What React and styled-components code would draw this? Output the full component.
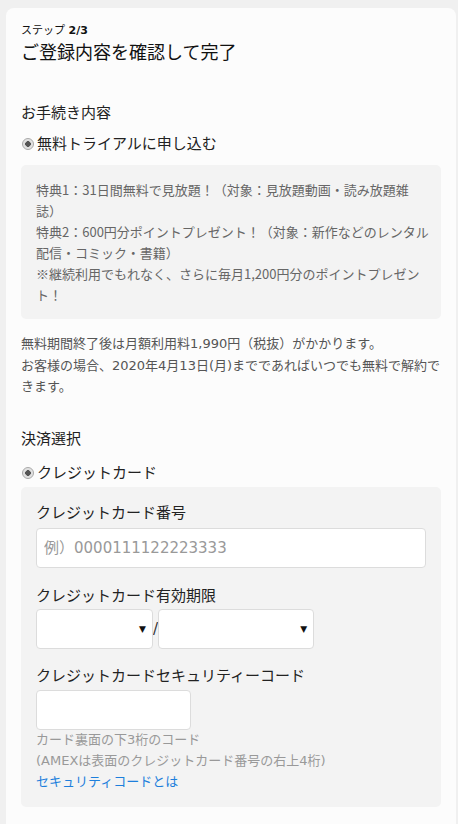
import React from "react";
import styled, { createGlobalStyle } from "styled-components";

const GlobalStyle = createGlobalStyle`
  html, body {
    margin: 0;
    padding: 0;
    background: #f0f0f0;
  }
  body {
    font-family: "DejaVu Sans", "Noto Sans CJK JP", sans-serif;
    color: #222;
  }
`;

const Page = styled.div`
  padding: 8px 2px 0 6px;
`;

const Card = styled.div`
  background: #fcfcfc;
  border-radius: 8px 8px 0 0;
  padding: 14px 15px 20px;
  min-height: 830px;
  box-sizing: border-box;
`;

const Step = styled.div`
  font-size: 11px;
  line-height: 18px;
  color: #111;

  b {
    font-weight: bold;
  }
`;

const Title = styled.h1`
  margin: 0;
  font-size: 18px;
  line-height: 26px;
  font-weight: normal;
  color: #111;
`;

const Heading = styled.h2`
  margin: ${({ $top }) => $top}px 0 ${({ $bottom }) => $bottom}px;
  font-size: 15px;
  line-height: 22px;
  font-weight: normal;
  color: #222;
`;

const RadioRow = styled.label`
  display: flex;
  align-items: center;
  gap: 3px;
  font-size: 15px;
  line-height: 22px;
  color: #222;
  margin-bottom: ${({ $bottom }) => $bottom}px;
`;

const RadioDot = styled.span`
  width: 12px;
  height: 12px;
  box-sizing: border-box;
  border-radius: 50%;
  border: 1px solid #a8a8a8;
  background: radial-gradient(circle, #555 0 2.6px, #dcdcdc 3px, #eee 100%);
  flex-shrink: 0;
  margin-left: 1px;
`;

const Panel = styled.div`
  background: #f3f3f3;
  border-radius: 5px;
  padding: ${({ $pad }) => $pad};
`;

const PerkText = styled.p`
  margin: 0;
  font-family: "Noto Sans CJK JP", sans-serif;
  font-size: 13px;
  line-height: 21px;
  color: #666;
`;

const Notes = styled.p`
  margin: 14px 0 0;
  font-size: 13px;
  line-height: 21.5px;
  color: #555;
`;

const FieldLabel = styled.div`
  font-size: 15px;
  line-height: 22px;
  color: #222;
  margin-top: ${({ $top }) => $top || 0}px;
  margin-bottom: ${({ $bottom }) => ($bottom === undefined ? 4 : $bottom)}px;
`;

const TextInput = styled.input`
  display: block;
  box-sizing: border-box;
  width: ${({ $width }) => $width};
  height: 40px;
  border: 1px solid #dcdcdc;
  border-radius: 4px;
  background: #fff;
  padding: 0 7px;
  font-family: inherit;
  font-size: 15px;
  color: #333;

  &::placeholder {
    color: #999;
  }
`;

const ExpiryRow = styled.div`
  display: flex;
  align-items: center;
`;

const SelectWrap = styled.div`
  position: relative;
  width: ${({ $width }) => $width}px;
  height: 40px;
`;

const Select = styled.select`
  appearance: none;
  width: 100%;
  height: 100%;
  box-sizing: border-box;
  border: 1px solid #dcdcdc;
  border-radius: 4px;
  background: #fff;
  font-family: inherit;
  font-size: 15px;
`;

const Arrow = styled.span`
  position: absolute;
  right: 7px;
  top: 50%;
  transform: translateY(-50%);
  font-size: 9px;
  line-height: 1;
  color: #111;
  pointer-events: none;
`;

const Slash = styled.span`
  font-size: 15px;
  color: #333;
`;

const HelpBlock = styled.div`
  margin-top: -1px;
`;

const Help = styled.div`
  font-size: 13px;
  line-height: 21px;
  color: #999;
`;

const HelpLink = styled.a`
  display: block;
  font-size: 13px;
  line-height: 21px;
  color: #1d7fdc;
  text-decoration: none;
`;

const ExpirySelect = ({ width }) => (
  <SelectWrap $width={width}>
    <Select defaultValue="">
      <option value=""></option>
    </Select>
    <Arrow>▼</Arrow>
  </SelectWrap>
);

export default function App() {
  return (
    <>
      <GlobalStyle />
      <Page>
        <Card>
          <Step>
            ステップ <b>2/3</b>
          </Step>
          <Title>ご登録内容を確認して完了</Title>

          <Heading $top={36} $bottom={9}>
            お手続き内容
          </Heading>
          <RadioRow $bottom={10}>
            <RadioDot />
            無料トライアルに申し込む
          </RadioRow>
          <Panel $pad="14px 10px 14px 15px">
            <PerkText>
              特典1：31日間無料で見放題！（対象：見放題動画・読み放題雑誌）
              <br />
              特典2：600円分ポイントプレゼント！（対象：新作などのレンタル配信・コミック・書籍）
              <br />
              ※継続利用でもれなく、さらに毎月1,200円分のポイントプレゼント！
            </PerkText>
          </Panel>
          <Notes>
            無料期間終了後は月額利用料1,990円（税抜）がかかります。
            <br />
            お客様の場合、2020年4月13日(月)までであればいつでも無料で解約できます。
          </Notes>

          <Heading $top={30} $bottom={12}>
            決済選択
          </Heading>
          <RadioRow $bottom={3}>
            <RadioDot />
            クレジットカード
          </RadioRow>
          <Panel $pad="15px 15px 15px">
            <FieldLabel>クレジットカード番号</FieldLabel>
            <TextInput $width="100%" placeholder="例）0000111122223333" />

            <FieldLabel $top={17} $bottom={2}>
              クレジットカード有効期限
            </FieldLabel>
            <ExpiryRow>
              <ExpirySelect width={117} />
              <Slash>/</Slash>
              <ExpirySelect width={156} />
            </ExpiryRow>

            <FieldLabel $top={16} $bottom={3}>
              クレジットカードセキュリティーコード
            </FieldLabel>
            <TextInput $width="155px" />
            <HelpBlock>
              <Help>カード裏面の下3桁のコード</Help>
              <Help>(AMEXは表面のクレジットカード番号の右上4桁)</Help>
              <HelpLink href="#">セキュリティコードとは</HelpLink>
            </HelpBlock>
          </Panel>
        </Card>
      </Page>
    </>
  );
}
